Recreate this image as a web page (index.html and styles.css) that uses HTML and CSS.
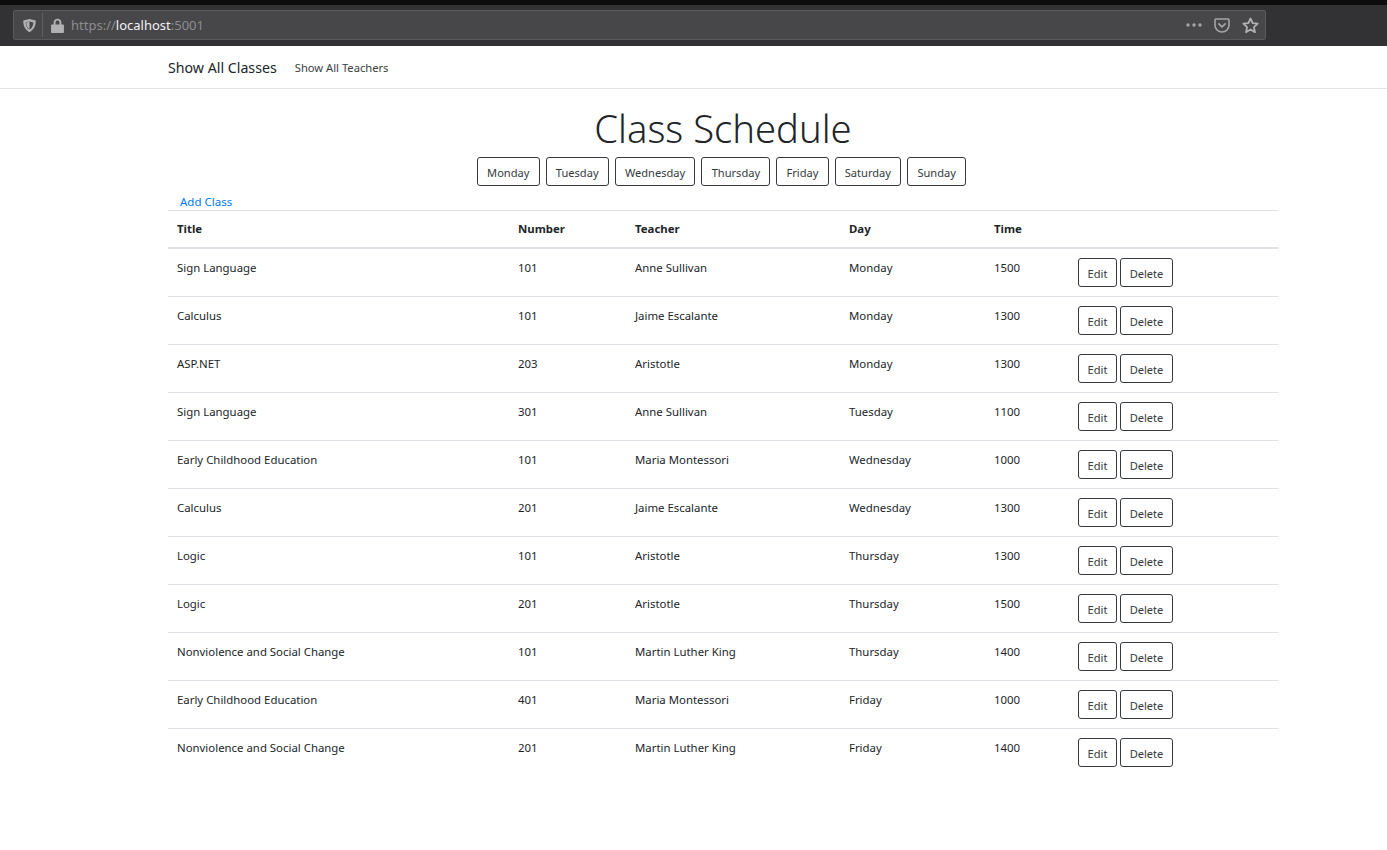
FILE: index.html
```html
<!DOCTYPE html>
<html>
  <head>
    <title>Class Schedule</title>
    <meta charset="UTF-8">
    <meta name="viewport" content="width=device-width, initial-scale=1.0">
    <link rel="stylesheet" href="styles.css">
  </head>
  <body>
    <div class="browser-bar">
      <div class="url-box">
        <svg class="icon-shield" width="15" height="15" viewBox="0 0 14 14"><path d="M7 1 L12.8 2.4 C13 7.6 11 11 7 13.2 C3 11 1 7.6 1.2 2.4 Z M7 3.2 L3.4 4.1 C3.5 7.2 4.7 9.5 7 10.8 C9.3 9.5 10.5 7.2 10.6 4.1 Z M7 3.6 V10.4 C5 9.2 4 7.2 3.9 4.4 Z" fill="#b1b1b3" fill-rule="evenodd"/></svg>
        <span class="url-sep"></span>
        <svg class="icon-lock" width="13" height="15" viewBox="0 0 12 14"><path d="M1 6 H2.4 V4.2 C2.4 2 4 .8 6 .8 C8 .8 9.6 2 9.6 4.2 V6 H11 C11.6 6 12 6.4 12 7 V13 C12 13.6 11.6 14 11 14 H1 C.4 14 0 13.6 0 13 V7 C0 6.4 .4 6 1 6 Z M4.2 6 H7.8 V4.2 C7.8 3 7 2.4 6 2.4 C5 2.4 4.2 3 4.2 4.2 Z" fill="#b1b1b3" fill-rule="evenodd"/></svg>
        <span class="url-text">https://<span class="url-host">localhost</span>:5001</span>
        <span class="url-actions">
          <svg width="16" height="4" viewBox="0 0 16 4"><circle cx="2" cy="2" r="1.7" fill="#a5a5a7"/><circle cx="8" cy="2" r="1.7" fill="#a5a5a7"/><circle cx="14" cy="2" r="1.7" fill="#a5a5a7"/></svg>
          <svg width="16" height="15" viewBox="0 0 16 15"><path d="M2 1 H14 C14.6 1 15 1.4 15 2 V7 C15 11 12 14 8 14 C4 14 1 11 1 7 V2 C1 1.4 1.4 1 2 1 Z" fill="none" stroke="#a5a5a7" stroke-width="1.6"/><path d="M4.8 5.8 L8 8.8 L11.2 5.8" fill="none" stroke="#a5a5a7" stroke-width="1.7" stroke-linecap="round"/></svg>
          <svg width="17" height="17" viewBox="0 0 16 16"><path d="M8 1.4 L10 5.8 L14.8 6.3 L11.2 9.5 L12.2 14.3 L8 11.8 L3.8 14.3 L4.8 9.5 L1.2 6.3 L6 5.8 Z" fill="none" stroke="#b1b1b3" stroke-width="1.7" stroke-linejoin="round"/></svg>
        </span>
      </div>
    </div>

    <nav class="navbar">
      <div class="container nav-inner">
        <a class="brand" href="#">Show All Classes</a>
        <a class="nav-link" href="#">Show All Teachers</a>
      </div>
    </nav>

    <main class="container">
      <h1 class="page-title">Class Schedule</h1>
      <div class="day-buttons">
        <button class="btn">Monday</button>
        <button class="btn">Tuesday</button>
        <button class="btn">Wednesday</button>
        <button class="btn">Thursday</button>
        <button class="btn">Friday</button>
        <button class="btn">Saturday</button>
        <button class="btn">Sunday</button>
      </div>
      <a class="add-link" href="#">Add Class</a>
      <table>
        <colgroup>
          <col class="col-title"><col class="col-number"><col class="col-teacher"><col class="col-day"><col class="col-time"><col>
        </colgroup>
        <thead>
          <tr><th>Title</th><th>Number</th><th>Teacher</th><th>Day</th><th>Time</th><th></th></tr>
        </thead>
        <tbody>
          <tr><td>Sign Language</td><td>101</td><td>Anne Sullivan</td><td>Monday</td><td>1500</td><td class="actions"><button class="btn">Edit</button><button class="btn">Delete</button></td></tr>
          <tr><td>Calculus</td><td>101</td><td>Jaime Escalante</td><td>Monday</td><td>1300</td><td class="actions"><button class="btn">Edit</button><button class="btn">Delete</button></td></tr>
          <tr><td>ASP.NET</td><td>203</td><td>Aristotle</td><td>Monday</td><td>1300</td><td class="actions"><button class="btn">Edit</button><button class="btn">Delete</button></td></tr>
          <tr><td>Sign Language</td><td>301</td><td>Anne Sullivan</td><td>Tuesday</td><td>1100</td><td class="actions"><button class="btn">Edit</button><button class="btn">Delete</button></td></tr>
          <tr><td>Early Childhood Education</td><td>101</td><td>Maria Montessori</td><td>Wednesday</td><td>1000</td><td class="actions"><button class="btn">Edit</button><button class="btn">Delete</button></td></tr>
          <tr><td>Calculus</td><td>201</td><td>Jaime Escalante</td><td>Wednesday</td><td>1300</td><td class="actions"><button class="btn">Edit</button><button class="btn">Delete</button></td></tr>
          <tr><td>Logic</td><td>101</td><td>Aristotle</td><td>Thursday</td><td>1300</td><td class="actions"><button class="btn">Edit</button><button class="btn">Delete</button></td></tr>
          <tr><td>Logic</td><td>201</td><td>Aristotle</td><td>Thursday</td><td>1500</td><td class="actions"><button class="btn">Edit</button><button class="btn">Delete</button></td></tr>
          <tr><td>Nonviolence and Social Change</td><td>101</td><td>Martin Luther King</td><td>Thursday</td><td>1400</td><td class="actions"><button class="btn">Edit</button><button class="btn">Delete</button></td></tr>
          <tr><td>Early Childhood Education</td><td>401</td><td>Maria Montessori</td><td>Friday</td><td>1000</td><td class="actions"><button class="btn">Edit</button><button class="btn">Delete</button></td></tr>
          <tr><td>Nonviolence and Social Change</td><td>201</td><td>Martin Luther King</td><td>Friday</td><td>1400</td><td class="actions"><button class="btn">Edit</button><button class="btn">Delete</button></td></tr>
        </tbody>
      </table>
    </main>
  </body>
</html>
```
FILE: styles.css
```css
*{
  box-sizing: border-box;
}

body{
  margin: 0;
  background: #fff;
  color: #212529;
  font-family: "Noto Sans", "Open Sans", sans-serif;
  font-size: 11.4px;
  overflow: hidden;
}

.browser-bar{
  height: 46px;
  padding: 5px 121px 6px 13px;
  background: #323234;
  border-top: 5px solid #0c0c0d;
}

.url-box{
  display: flex;
  align-items: center;
  height: 30px;
  padding: 0 6px 0 8px;
  background: #474749;
  border: 1px solid #5a5a5c;
  border-radius: 2px;
}

.url-sep{
  width: 1px;
  height: 24px;
  margin: 0 8px 0 5px;
  background: #5f5f61;
}

.url-text{
  margin-left: 7px;
  font-size: 13px;
  color: #8d8d8f;
}

.url-host{
  color: #f2f2f3;
}

.url-actions{
  display: flex;
  align-items: center;
  gap: 12px;
  margin-left: auto;
}

.container{
  width: 1110px;
  margin-left: 168px;
}

.navbar{
  height: 43px;
  border-bottom: 1px solid #e2e3e5;
}

.nav-inner{
  display: flex;
  align-items: center;
  height: 42px;
}

.brand{
  margin-right: 18px;
  font-size: 14.2px;
  color: #212529;
  text-decoration: none;
}

.nav-link{
  font-size: 11.2px;
  color: #3a3e42;
  text-decoration: none;
}

.page-title{
  margin: 12px 0 0;
  height: 56px;
  font-size: 38.2px;
  font-weight: 300;
  line-height: 54px;
  text-align: center;
}

.day-buttons{
  display: flex;
  justify-content: center;
  gap: 6px;
  padding-right: 3px;
}

.day-buttons .btn{
  padding: 2px 9.2px 0;
}

.btn{
  height: 29px;
  padding: 2px 8.6px 0;
  background: #fff;
  border: 1px solid #343a40;
  border-radius: 3px;
  color: #343a40;
  font-family: inherit;
  font-size: 11.1px;
}

.add-link{
  display: block;
  height: 24px;
  padding: 7px 0 0 12px;
  color: #007bff;
  font-size: 11.5px;
  line-height: 17px;
  text-decoration: none;
}

table{
  width: 100%;
  border-collapse: collapse;
  table-layout: fixed;
}

.col-title{ width: 341px; }
.col-number{ width: 117px; }
.col-teacher{ width: 214px; }
.col-day{ width: 145px; }
.col-time{ width: 84px; }

th{
  height: 37px;
  padding: 0 9px;
  border-top: 1px solid #dee2e6;
  border-bottom: 2px solid #dee2e6;
  text-align: left;
  font-weight: 700;
}

td{
  height: 48px;
  padding: 0 9px 10px;
  border-top: 1px solid #dee2e6;
}

tbody tr:first-child td{
  height: 49px;
  border-top: 0;
}

td.actions{
  padding: 0 9px;
}

.actions .btn{
  margin-right: 3px;
}
```
